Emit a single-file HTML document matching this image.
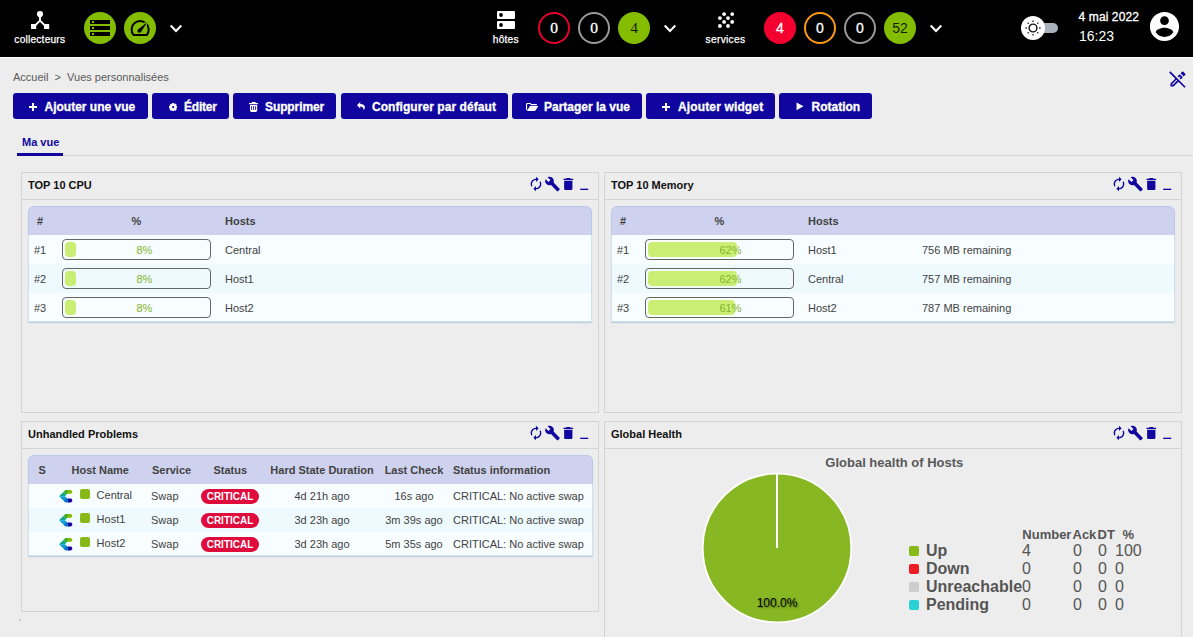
<!DOCTYPE html>
<html lang="fr">
<head>
<meta charset="utf-8">
<title>Vues personnalisées</title>
<style>
*{box-sizing:border-box;margin:0;padding:0}
html,body{width:1193px;height:637px;overflow:hidden;background:#ededed;font-family:"Liberation Sans",Arial,sans-serif;font-size:12px;color:#424242}
.abs{position:absolute}
#top{position:absolute;left:0;top:0;width:1193px;height:57px;background:#000}
#top .lbl{position:absolute;color:#fff;font-size:10.200px;letter-spacing:.2px;margin-top:.5px;margin-left:-.2px;-webkit-text-stroke:.25px #fff;line-height:12px;text-align:center;white-space:nowrap}
.circ{position:absolute;width:32px;height:32px;border-radius:50%;top:12px;text-align:center;line-height:28px;font-size:15px;color:#fff;border:2px solid transparent}
.circ.fill{line-height:32px;border:0}
.circ.w{-webkit-text-stroke:.3px #fff}
.serif{font-family:"Liberation Serif","Times New Roman",serif;font-size:15.500px}
.chev{position:absolute;top:22.700px;width:14px;height:10px}
#crumb{position:absolute;left:13px;top:69.800px;font-size:11px;line-height:14px;color:#5a5a5a;white-space:pre}
.btn{position:absolute;top:93px;height:26px;background:#10069f;border-radius:3px;color:#fff;font-weight:bold;font-size:12px;line-height:28px;white-space:nowrap;padding-left:0}
.btn span{position:absolute;top:0;-webkit-text-stroke:.3px #fff}
#tabline{position:absolute;left:17px;top:155px;width:1176px;height:1px;background:#d6d6d6}
#tabsel{position:absolute;left:17px;top:153px;width:46px;height:3px;background:#10069f}
#tabtxt{position:absolute;left:22px;top:135px;font-size:11px;line-height:14px;font-weight:bold;color:#10069f}
.wid{position:absolute;border:1px solid #d4d4d4;background:#ededed}
.wid .hd{position:absolute;left:0;top:0;right:0;height:27px;border-bottom:1px solid #d4d4d4}
.wid .ttl{position:absolute;left:6px;top:5px;font-size:11px;line-height:14px;font-weight:bold;color:#111}
.wid .ico{position:absolute;right:6.200px;top:2.200px;width:64px;height:18px}
.tbl{position:absolute;left:6px;top:33px;width:564px;border-radius:6px 6px 0 0;overflow:hidden;box-shadow:0 1px 1px #b9cbd8}
.tbl::after{content:"";position:absolute;left:0;top:0;right:0;bottom:0;border:1px solid rgba(160,190,225,.45);border-radius:6px 6px 0 0;pointer-events:none}
.tbl .th{height:29px;background:#ced2ee;position:relative;font-weight:bold;color:#424242;font-size:11px}
.tbl .tr{height:29px;position:relative;background:#f8fdff;font-size:11px;color:#424242}
.tbl .tr.alt{background:#effafe}
.tbl span{position:absolute;top:1px;line-height:29px;white-space:nowrap}
.bar{position:absolute;left:34px;top:4px;width:149px;height:21px;border:1px solid #666;border-radius:4px}
.bar i{position:absolute;left:2px;top:2px;height:15px;background:#caee73;border-radius:4px}
.bar b{position:absolute;left:73.500px;top:1px;line-height:19px;font-weight:normal;color:#84b52a;font-size:11px}
.tbl .p{line-height:24px;top:.4px}
.sq{position:absolute;left:52px;top:5px;width:10px;height:10px;border-radius:2px;background:#88b917}
.crit{position:absolute;left:173px;top:5px;width:58px;height:15px;border-radius:8px;background:#e00b3d;color:#fff;font-size:10px;line-height:15.600px;text-align:center;font-weight:bold}
.lg{position:absolute;left:0;font-size:16px;line-height:18px;color:#555;white-space:nowrap}
.lg b,.lg span{position:absolute;top:0}
.lg i{position:absolute;left:304px;top:4.100px;width:10px;height:10px;border-radius:2px}
</style>
</head>
<body>
<div id="top">
<svg class="abs" style="left:28px;top:8px" width="24" height="24" viewBox="0 0 24 24"><circle cx="12" cy="6" r="3.1" fill="#fff"/><path d="M12 8v5M12 12.6L5.6 19M12 12.6l6.400 6.400" stroke="#fff" stroke-width="1.900" fill="none"/><rect x="3" y="16" width="5.200" height="5" fill="#fff"/><rect x="16" y="16" width="5.200" height="5" fill="#fff"/></svg>
<div class="lbl" style="left:10px;top:33px;width:60px">collecteurs</div>
<div class="circ fill" style="left:84px;background:#84bd00"></div>
<svg class="abs" style="left:90px;top:20px" width="20" height="16" viewBox="0 0 20 16"><g fill="#000"><rect x="0" y="0" width="20" height="4"/><rect x="0" y="6" width="20" height="4"/><rect x="0" y="12" width="20" height="4"/></g><g fill="#84bd00"><rect x="2" y="1" width="2" height="2"/><rect x="2" y="7" width="2" height="2"/><rect x="2" y="13" width="2" height="2"/></g></svg>
<div class="circ fill" style="left:124px;background:#84bd00"></div>
<svg class="abs" style="left:129px;top:18px" width="22" height="20" viewBox="0 0 22 20"><path d="M4.560 17 A8.550 8.550 0 1 1 17.740 17 Z" fill="none" stroke="#000" stroke-width="2" stroke-linejoin="round"/><path d="M8.600 11.400 L18.600 3.600 L12.400 14 Z" fill="#84bd00" stroke="#84bd00" stroke-width="2.200" stroke-linejoin="round"/><path d="M9 11.600 L18.400 4 L12 14 Z" fill="#000"/><circle cx="10.300" cy="12.800" r="1.900" fill="#000"/></svg>
<svg class="chev" style="left:169px" viewBox="0 0 14 10"><path d="M1.700 2.500L7 8l5.300-5.500" stroke="#fff" stroke-width="2" fill="none"/></svg>

<svg class="abs" style="left:497px;top:11px" width="18" height="18" viewBox="0 0 18 18"><rect x="0" y="0" width="18" height="8" rx="1" fill="#fff"/><rect x="0" y="10" width="18" height="8" rx="1" fill="#fff"/><circle cx="4" cy="4" r="1.900" fill="#000"/><circle cx="4" cy="14" r="1.900" fill="#000"/></svg>
<div class="lbl" style="left:476px;top:33px;width:60px">hôtes</div>
<div class="circ serif w" style="left:538px;border-color:#e8002f">0</div>
<div class="circ serif w" style="left:578px;border-color:#9a9a9a">0</div>
<div class="circ fill serif" style="left:618px;background:#84bd00;color:#101800">4</div>
<svg class="chev" style="left:663px" viewBox="0 0 14 10"><path d="M1.700 2.500L7 8l5.300-5.500" stroke="#fff" stroke-width="2" fill="none"/></svg>

<svg class="abs" style="left:716px;top:10px" width="20" height="20" viewBox="0 0 20 20"><g fill="#fff"><circle cx="8.100" cy="4.100" r="1.900"/><circle cx="16.200" cy="4.100" r="1.900"/><circle cx="3.900" cy="8.100" r="1.900"/><circle cx="12" cy="8.100" r="1.900"/><circle cx="8.100" cy="11.900" r="1.900"/><circle cx="16.200" cy="11.900" r="1.900"/><circle cx="3.900" cy="16" r="1.900"/><circle cx="12" cy="16" r="1.900"/></g></svg>
<div class="lbl" style="left:695.700px;top:33px;width:60px;letter-spacing:.3px">services</div>
<div class="circ fill w" style="left:764px;background:#f4002f;font-size:14px">4</div>
<div class="circ w" style="left:804px;border-color:#ff9a13;font-size:14px">0</div>
<div class="circ w" style="left:844px;border-color:#9a9a9a;font-size:14px">0</div>
<div class="circ fill" style="left:884px;background:#84bd00;color:#151f00;font-size:14px">52</div>
<svg class="chev" style="left:929px" viewBox="0 0 14 10"><path d="M1.700 2.500L7 8l5.300-5.500" stroke="#fff" stroke-width="2" fill="none"/></svg>

<div class="abs" style="left:1030px;top:23px;width:28px;height:10px;border-radius:5px;background:#a9b1bc"></div>
<div class="abs" style="left:1020.500px;top:16px;width:24px;height:24px;border-radius:50%;background:#fff"></div>
<svg class="abs" style="left:1023px;top:18.200px" width="20" height="20" viewBox="0 0 20 20"><circle cx="10" cy="10" r="3.900" fill="none" stroke="#111" stroke-width="1.400"/><path d="M16.10 10.00L17.60 10.00M14.31 14.31L15.37 15.37M10.00 16.10L10.00 17.60M5.69 14.31L4.63 15.37M3.90 10.00L2.40 10.00M5.69 5.69L4.63 4.63M10.00 3.90L10.00 2.40M14.31 5.69L15.37 4.63" stroke="#222" stroke-width="1.300" fill="none"/></svg>
<div class="abs" style="left:1078.600px;top:10px;color:#fff;font-size:12px;line-height:14px;white-space:nowrap;-webkit-text-stroke:.3px #fff;letter-spacing:.1px">4 mai 2022</div>
<div class="abs" style="left:1079px;top:28px;color:#fff;font-size:14px;line-height:16px;white-space:nowrap">16:23</div>
<svg class="abs" style="left:1147px;top:9px" width="35" height="35" viewBox="0 0 24 24"><path fill="#fff" d="M12 2C6.480 2 2 6.480 2 12s4.480 10 10 10 10-4.480 10-10S17.520 2 12 2zm0 3c1.660 0 3 1.340 3 3s-1.340 3-3 3-3-1.340-3-3 1.340-3 3-3zm0 14.200c-2.500 0-4.710-1.280-6-3.220.030-1.990 4-3.080 6-3.080 1.990 0 5.970 1.090 6 3.080-1.290 1.940-3.500 3.220-6 3.220z"/></svg>
</div>
<div class="abs" style="left:0;top:57px;width:1193px;height:1px;background:#fff"></div>
<svg class="abs" style="left:1168px;top:69px" width="20" height="20" viewBox="0 0 24 24"><path fill="#10069f" d="m14.060 9.020.92.920-1.110 1.110 1.410 1.410 2.520-2.520-3.750-3.750-2.520 2.520 1.410 1.410 1.120-1.100zm6.650-1.980c.39-.39.39-1.020 0-1.410l-2.340-2.340c-.2-.2-.45-.29-.71-.29s-.51.100-.7.290l-1.830 1.830 3.750 3.750 1.830-1.830zM2.810 2.810 1.390 4.220l7.320 7.330L3 17.250V21h3.750l5.710-5.710 7.320 7.320 1.410-1.410L2.810 2.810zM5.920 19H5v-.92l5.130-5.130.92.920L5.920 19z"/></svg>
<div id="crumb">Accueil  &gt;  Vues personnalisées</div>
<div class="btn" style="left:13px;width:135px"><svg class="abs" style="left:16px;top:10px" width="8" height="8" viewBox="0 0 8 8"><path d="M4 0v8M0 4h8" stroke="#fff" stroke-width="2"/></svg><span style="left:31.5px">Ajouter une vue</span></div>
<div class="btn" style="left:152px;width:77px"><svg class="abs" style="left:16.700px;top:9.800px" width="8.400" height="8.400" viewBox="0 0 18 18"><g fill="#fff"><circle cx="9" cy="9" r="6.300"/><rect x="6.600" y="0" width="4.800" height="18"/><rect x="0" y="6.600" width="18" height="4.800"/><rect x="6.600" y=".2" width="4.800" height="17.600" transform="rotate(45 9 9)"/><rect x="6.600" y=".2" width="4.800" height="17.600" transform="rotate(-45 9 9)"/></g><circle cx="9" cy="9" r="2.300" fill="#10069f"/></svg><span style="left:32px;letter-spacing:-.2px">Éditer</span></div>
<div class="btn" style="left:233px;width:103px"><svg class="abs" style="left:15.900px;top:8.900px" width="9.200" height="10.200" viewBox="0 0 9.200 10.200"><path fill="#fff" d="M3 0h3.400l.5 1.100H9.200v1.200H0V1.100h2.500zM1 3.100h7.200v5.500l-1 1.600H2l-1-1.600z"/><path d="M2.600 4.100v3.800M4.600 4.100v3.800M6.600 4.100v3.800" stroke="#10069f" stroke-width=".85"/></svg><span style="left:32px;letter-spacing:-.1px">Supprimer</span></div>
<div class="btn" style="left:341px;width:167px"><svg class="abs" style="left:15.800px;top:8.800px" width="8.500" height="8.500" viewBox="0 0 8.500 8.500"><path fill="#fff" d="M3.200 0L0 3.200l3.200 3.200V4.500c2.200 0 3.600.9 3.300 3.900C8.800 6 8.600 2.200 3.200 2z"/></svg><span style="left:31px;letter-spacing:.06px">Configurer par défaut</span></div>
<div class="btn" style="left:512px;width:130px"><svg class="abs" style="left:14px;top:10px" width="12.400" height="8.400" viewBox="0 0 12.400 8.400"><path d="M.55 7V1.400Q.55.55 1.400.55H4.300L5.300 1.600H10.900" stroke="#fff" stroke-width="1.100" fill="none"/><path fill="#fff" d="M.8 8.100L4 3.100h8.300L9.100 8.100z"/></svg><span style="left:32px">Partager la vue</span></div>
<div class="btn" style="left:646px;width:129px"><svg class="abs" style="left:16px;top:10px" width="8" height="8" viewBox="0 0 8 8"><path d="M4 0v8M0 4h8" stroke="#fff" stroke-width="2"/></svg><span style="left:32px;letter-spacing:.14px">Ajouter widget</span></div>
<div class="btn" style="left:779px;width:93px"><svg class="abs" style="left:17px;top:9px" width="8" height="8.600" viewBox="0 0 8 10"><path fill="#fff" d="M0 .5L8 5 0 9.500z"/></svg><span style="left:32.5px">Rotation</span></div>
<div class="wid" style="left:21px;top:172px;width:578px;height:241px"><div class="hd"><div class="ttl">TOP 10 CPU</div><svg class="ico" viewBox="0 0 64 16"><g fill="#10069f"><g transform="scale(.6667)"><path d="M12 6v3l4-4-4-4v3c-4.420 0-8 3.580-8 8 0 1.570.46 3.030 1.240 4.260L6.700 14.800c-.45-.83-.7-1.790-.7-2.800 0-3.310 2.690-6 6-6zm6.760 1.740L17.300 9.200c.44.840.7 1.790.7 2.800 0 3.310-2.690 6-6 6v-3l-4 4 4 4v-3c4.420 0 8-3.580 8-8 0-1.570-.46-3.030-1.240-4.260z"/></g><g transform="translate(16.500 0) scale(.6667)"><path d="M22.700 19l-9.100-9.100c.9-2.300.4-5-1.500-6.900-2-2-5-2.400-7.400-1.300L9 6 6 9 1.600 4.700C.4 7.100.9 10.100 2.900 12.100c1.900 1.900 4.600 2.400 6.900 1.500l9.100 9.100c.4.400 1 .4 1.400 0l2.300-2.300c.5-.4.500-1.100.1-1.400z"/></g><g transform="translate(32 0) scale(.69 .6667)"><path d="M6 19c0 1.100.9 2 2 2h8c1.100 0 2-.9 2-2V7H6v12zM19 4h-3.500l-1-1h-5l-1 1H5v2h14V4z"/></g><g transform="translate(48.200 0) scale(.6667)"><path d="M6 19h12v2H6z"/></g></g></svg></div>
<div class="tbl"><div class="th"><span style="left:0;width:24px;text-align:center">#</span><span style="left:24px;width:169px;text-align:center">%</span><span style="left:197px">Hosts</span></div>
<div class="tr"><span style="left:0;width:24px;text-align:center">#1</span><div class="bar"><i style="width:11px"></i><b>8%</b></div><span style="left:197px">Central</span></div>
<div class="tr alt"><span style="left:0;width:24px;text-align:center">#2</span><div class="bar"><i style="width:11px"></i><b>8%</b></div><span style="left:197px">Host1</span></div>
<div class="tr"><span style="left:0;width:24px;text-align:center">#3</span><div class="bar"><i style="width:11px"></i><b>8%</b></div><span style="left:197px">Host2</span></div>
</div></div>
<div class="wid" style="left:604px;top:172px;width:578px;height:241px"><div class="hd"><div class="ttl">TOP 10 Memory</div><svg class="ico" viewBox="0 0 64 16"><g fill="#10069f"><g transform="scale(.6667)"><path d="M12 6v3l4-4-4-4v3c-4.420 0-8 3.580-8 8 0 1.570.46 3.030 1.240 4.260L6.700 14.800c-.45-.83-.7-1.790-.7-2.800 0-3.310 2.690-6 6-6zm6.760 1.740L17.300 9.200c.44.840.7 1.790.7 2.800 0 3.310-2.690 6-6 6v-3l-4 4 4 4v-3c4.420 0 8-3.580 8-8 0-1.570-.46-3.030-1.240-4.260z"/></g><g transform="translate(16.500 0) scale(.6667)"><path d="M22.700 19l-9.100-9.100c.9-2.300.4-5-1.500-6.900-2-2-5-2.400-7.400-1.300L9 6 6 9 1.600 4.700C.4 7.100.9 10.100 2.900 12.100c1.900 1.900 4.600 2.400 6.900 1.500l9.100 9.100c.4.400 1 .4 1.400 0l2.300-2.300c.5-.4.500-1.100.1-1.400z"/></g><g transform="translate(32 0) scale(.69 .6667)"><path d="M6 19c0 1.100.9 2 2 2h8c1.100 0 2-.9 2-2V7H6v12zM19 4h-3.500l-1-1h-5l-1 1H5v2h14V4z"/></g><g transform="translate(48.200 0) scale(.6667)"><path d="M6 19h12v2H6z"/></g></g></svg></div>
<div class="tbl"><div class="th"><span style="left:0;width:24px;text-align:center">#</span><span style="left:24px;width:169px;text-align:center">%</span><span style="left:197px">Hosts</span></div>
<div class="tr"><span style="left:0;width:24px;text-align:center">#1</span><div class="bar"><i style="width:89px"></i><b>62%</b></div><span style="left:197px">Host1</span><span style="left:311px">756 MB remaining</span></div>
<div class="tr alt"><span style="left:0;width:24px;text-align:center">#2</span><div class="bar"><i style="width:89px"></i><b>62%</b></div><span style="left:197px">Central</span><span style="left:311px">757 MB remaining</span></div>
<div class="tr"><span style="left:0;width:24px;text-align:center">#3</span><div class="bar"><i style="width:87px"></i><b>61%</b></div><span style="left:197px">Host2</span><span style="left:311px">787 MB remaining</span></div>
</div></div>
<div class="wid" style="left:21px;top:421px;width:578px;height:191px"><div class="hd"><div class="ttl">Unhandled Problems</div><svg class="ico" viewBox="0 0 64 16"><g fill="#10069f"><g transform="scale(.6667)"><path d="M12 6v3l4-4-4-4v3c-4.420 0-8 3.580-8 8 0 1.570.46 3.030 1.240 4.260L6.700 14.800c-.45-.83-.7-1.790-.7-2.800 0-3.310 2.690-6 6-6zm6.760 1.740L17.300 9.200c.44.840.7 1.790.7 2.800 0 3.310-2.690 6-6 6v-3l-4 4 4 4v-3c4.420 0 8-3.580 8-8 0-1.570-.46-3.030-1.240-4.260z"/></g><g transform="translate(16.500 0) scale(.6667)"><path d="M22.700 19l-9.100-9.100c.9-2.300.4-5-1.500-6.900-2-2-5-2.400-7.400-1.300L9 6 6 9 1.600 4.700C.4 7.100.9 10.100 2.900 12.100c1.900 1.900 4.600 2.400 6.900 1.500l9.100 9.100c.4.400 1 .4 1.400 0l2.300-2.300c.5-.4.500-1.100.1-1.400z"/></g><g transform="translate(32 0) scale(.69 .6667)"><path d="M6 19c0 1.100.9 2 2 2h8c1.100 0 2-.9 2-2V7H6v12zM19 4h-3.500l-1-1h-5l-1 1H5v2h14V4z"/></g><g transform="translate(48.200 0) scale(.6667)"><path d="M6 19h12v2H6z"/></g></g></svg></div>
<div class="tbl" style="width:565px"><div class="th"><span style="left:10.500px">S</span><span style="left:43.500px">Host Name</span><span style="left:124px">Service</span><span style="left:185.500px">Status</span><span style="left:234px;width:120px;text-align:center">Hard State Duration</span><span style="left:346px;width:80px;text-align:center">Last Check</span><span style="left:425px">Status information</span></div>
<div class="tr" style="height:24px"><svg class="abs" style="left:31px;top:5px" width="14" height="14" viewBox="0 0 14 14"><path d="M8.900.9H11.200Q13.300.9 13.300 2.800 13.300 3.600 12.200 4.800H8.900z" fill="#84bd00"/><path d="M8.900.9H6.400L4.400 2.900l2.900 2.900 1-1H8.900z" fill="#3eb022"/><path d="M4.400 2.900L.1 7.200H5.900l1.400-1.400z" fill="#0ea78b"/><path d="M.1 7.200l4.300 4.300 2.900-2.900L5.900 7.200z" fill="#0aa0d5"/><path d="M4.400 11.500l2 2H8.900V9.600H8.300l-1-1z" fill="#0072ce"/><path d="M8.900 13.500H11.200Q13.300 13.500 13.300 11.600 13.300 10.800 12.200 9.600H8.900z" fill="#10069f"/></svg><i class="sq"></i><span class="p" style="left:68.600px;top:-.8px">Central</span><span class="p" style="left:123px">Swap</span><b class="crit">CRITICAL</b><span class="p" style="left:234px;width:120px;text-align:center">4d 21h ago</span><span class="p" style="left:346px;width:80px;text-align:center">16s ago</span><span class="p" style="left:425px">CRITICAL: No active swap</span></div>
<div class="tr alt" style="height:24px"><svg class="abs" style="left:31px;top:5px" width="14" height="14" viewBox="0 0 14 14"><path d="M8.900.9H11.200Q13.300.9 13.300 2.800 13.300 3.600 12.200 4.800H8.900z" fill="#84bd00"/><path d="M8.900.9H6.400L4.400 2.900l2.900 2.900 1-1H8.900z" fill="#3eb022"/><path d="M4.400 2.900L.1 7.200H5.900l1.400-1.400z" fill="#0ea78b"/><path d="M.1 7.200l4.300 4.300 2.900-2.900L5.900 7.200z" fill="#0aa0d5"/><path d="M4.400 11.500l2 2H8.900V9.600H8.300l-1-1z" fill="#0072ce"/><path d="M8.900 13.500H11.200Q13.300 13.500 13.300 11.600 13.300 10.800 12.200 9.600H8.900z" fill="#10069f"/></svg><i class="sq"></i><span class="p" style="left:68.600px;top:-.8px">Host1</span><span class="p" style="left:123px">Swap</span><b class="crit">CRITICAL</b><span class="p" style="left:234px;width:120px;text-align:center">3d 23h ago</span><span class="p" style="left:346px;width:80px;text-align:center">3m 39s ago</span><span class="p" style="left:425px">CRITICAL: No active swap</span></div>
<div class="tr" style="height:24px"><svg class="abs" style="left:31px;top:5px" width="14" height="14" viewBox="0 0 14 14"><path d="M8.900.9H11.200Q13.300.9 13.300 2.800 13.300 3.600 12.200 4.800H8.900z" fill="#84bd00"/><path d="M8.900.9H6.400L4.400 2.900l2.900 2.900 1-1H8.900z" fill="#3eb022"/><path d="M4.400 2.900L.1 7.200H5.900l1.400-1.400z" fill="#0ea78b"/><path d="M.1 7.200l4.300 4.300 2.900-2.900L5.900 7.200z" fill="#0aa0d5"/><path d="M4.400 11.500l2 2H8.900V9.600H8.300l-1-1z" fill="#0072ce"/><path d="M8.900 13.500H11.200Q13.300 13.500 13.300 11.600 13.300 10.800 12.200 9.600H8.900z" fill="#10069f"/></svg><i class="sq"></i><span class="p" style="left:68.600px;top:-.8px">Host2</span><span class="p" style="left:123px">Swap</span><b class="crit">CRITICAL</b><span class="p" style="left:234px;width:120px;text-align:center">3d 23h ago</span><span class="p" style="left:346px;width:80px;text-align:center">5m 35s ago</span><span class="p" style="left:425px">CRITICAL: No active swap</span></div>
</div></div>
<div class="wid" style="left:604px;top:421px;width:578px;height:230px"><div class="hd"><div class="ttl">Global Health</div><svg class="ico" viewBox="0 0 64 16"><g fill="#10069f"><g transform="scale(.6667)"><path d="M12 6v3l4-4-4-4v3c-4.420 0-8 3.580-8 8 0 1.570.46 3.030 1.240 4.260L6.700 14.800c-.45-.83-.7-1.790-.7-2.800 0-3.310 2.690-6 6-6zm6.760 1.740L17.300 9.200c.44.840.7 1.790.7 2.800 0 3.310-2.690 6-6 6v-3l-4 4 4 4v-3c4.420 0 8-3.580 8-8 0-1.570-.46-3.030-1.240-4.260z"/></g><g transform="translate(16.500 0) scale(.6667)"><path d="M22.700 19l-9.100-9.100c.9-2.300.4-5-1.500-6.900-2-2-5-2.400-7.400-1.300L9 6 6 9 1.600 4.700C.4 7.100.9 10.100 2.900 12.100c1.900 1.900 4.600 2.400 6.900 1.500l9.100 9.100c.4.400 1 .4 1.400 0l2.300-2.300c.5-.4.500-1.100.1-1.400z"/></g><g transform="translate(32 0) scale(.69 .6667)"><path d="M6 19c0 1.100.9 2 2 2h8c1.100 0 2-.9 2-2V7H6v12zM19 4h-3.500l-1-1h-5l-1 1H5v2h14V4z"/></g><g transform="translate(48.200 0) scale(.6667)"><path d="M6 19h12v2H6z"/></g></g></svg></div>
<div class="abs" style="left:.8px;top:32.700px;width:577px;text-align:center;font-size:13px;line-height:16px;font-weight:bold;color:#595959">Global health of Hosts</div>
<svg class="abs" style="left:94.700px;top:48.700px" width="154" height="154" viewBox="0 0 154 154"><circle cx="77" cy="77" r="74.300" fill="#87b823" stroke="#fff" stroke-width="1.800"/><path d="M77 77V2.500" stroke="#fff" stroke-width="2"/><text x="77" y="136" text-anchor="middle" font-family="Liberation Sans, Arial, sans-serif" font-size="12" fill="#000" style="text-shadow:1px 1px 2px rgba(0,0,0,.45)">100.0%</text></svg>
<div class="lg" style="top:104.700px;font-size:13px;line-height:15px"><b style="left:417.300px">Number</b><b style="left:467.500px">Ack</b><b style="left:492.500px">DT</b><b style="left:517.500px">%</b></div>
<div class="lg" style="top:119.9px"><i style="background:#88b917"></i><b style="left:321px">Up</b><span style="left:417px">4</span><span style="left:468px">0</span><span style="left:493px">0</span><span style="left:510px">100</span></div>
<div class="lg" style="top:137.9px"><i style="background:#ed1c24"></i><b style="left:321px">Down</b><span style="left:417px">0</span><span style="left:468px">0</span><span style="left:493px">0</span><span style="left:510px">0</span></div>
<div class="lg" style="top:155.9px"><i style="background:#cdcdcd"></i><b style="left:321px">Unreachable</b><span style="left:417px">0</span><span style="left:468px">0</span><span style="left:493px">0</span><span style="left:510px">0</span></div>
<div class="lg" style="top:173.9px"><i style="background:#2ad1d4"></i><b style="left:321px">Pending</b><span style="left:417px">0</span><span style="left:468px">0</span><span style="left:493px">0</span><span style="left:510px">0</span></div>
</div>
<div class="abs" style="left:19px;top:619px;width:2px;height:2px;background:#cfcfcf"></div>
<div id="tabline"></div><div id="tabsel"></div><div id="tabtxt">Ma vue</div>
</body>
</html>
